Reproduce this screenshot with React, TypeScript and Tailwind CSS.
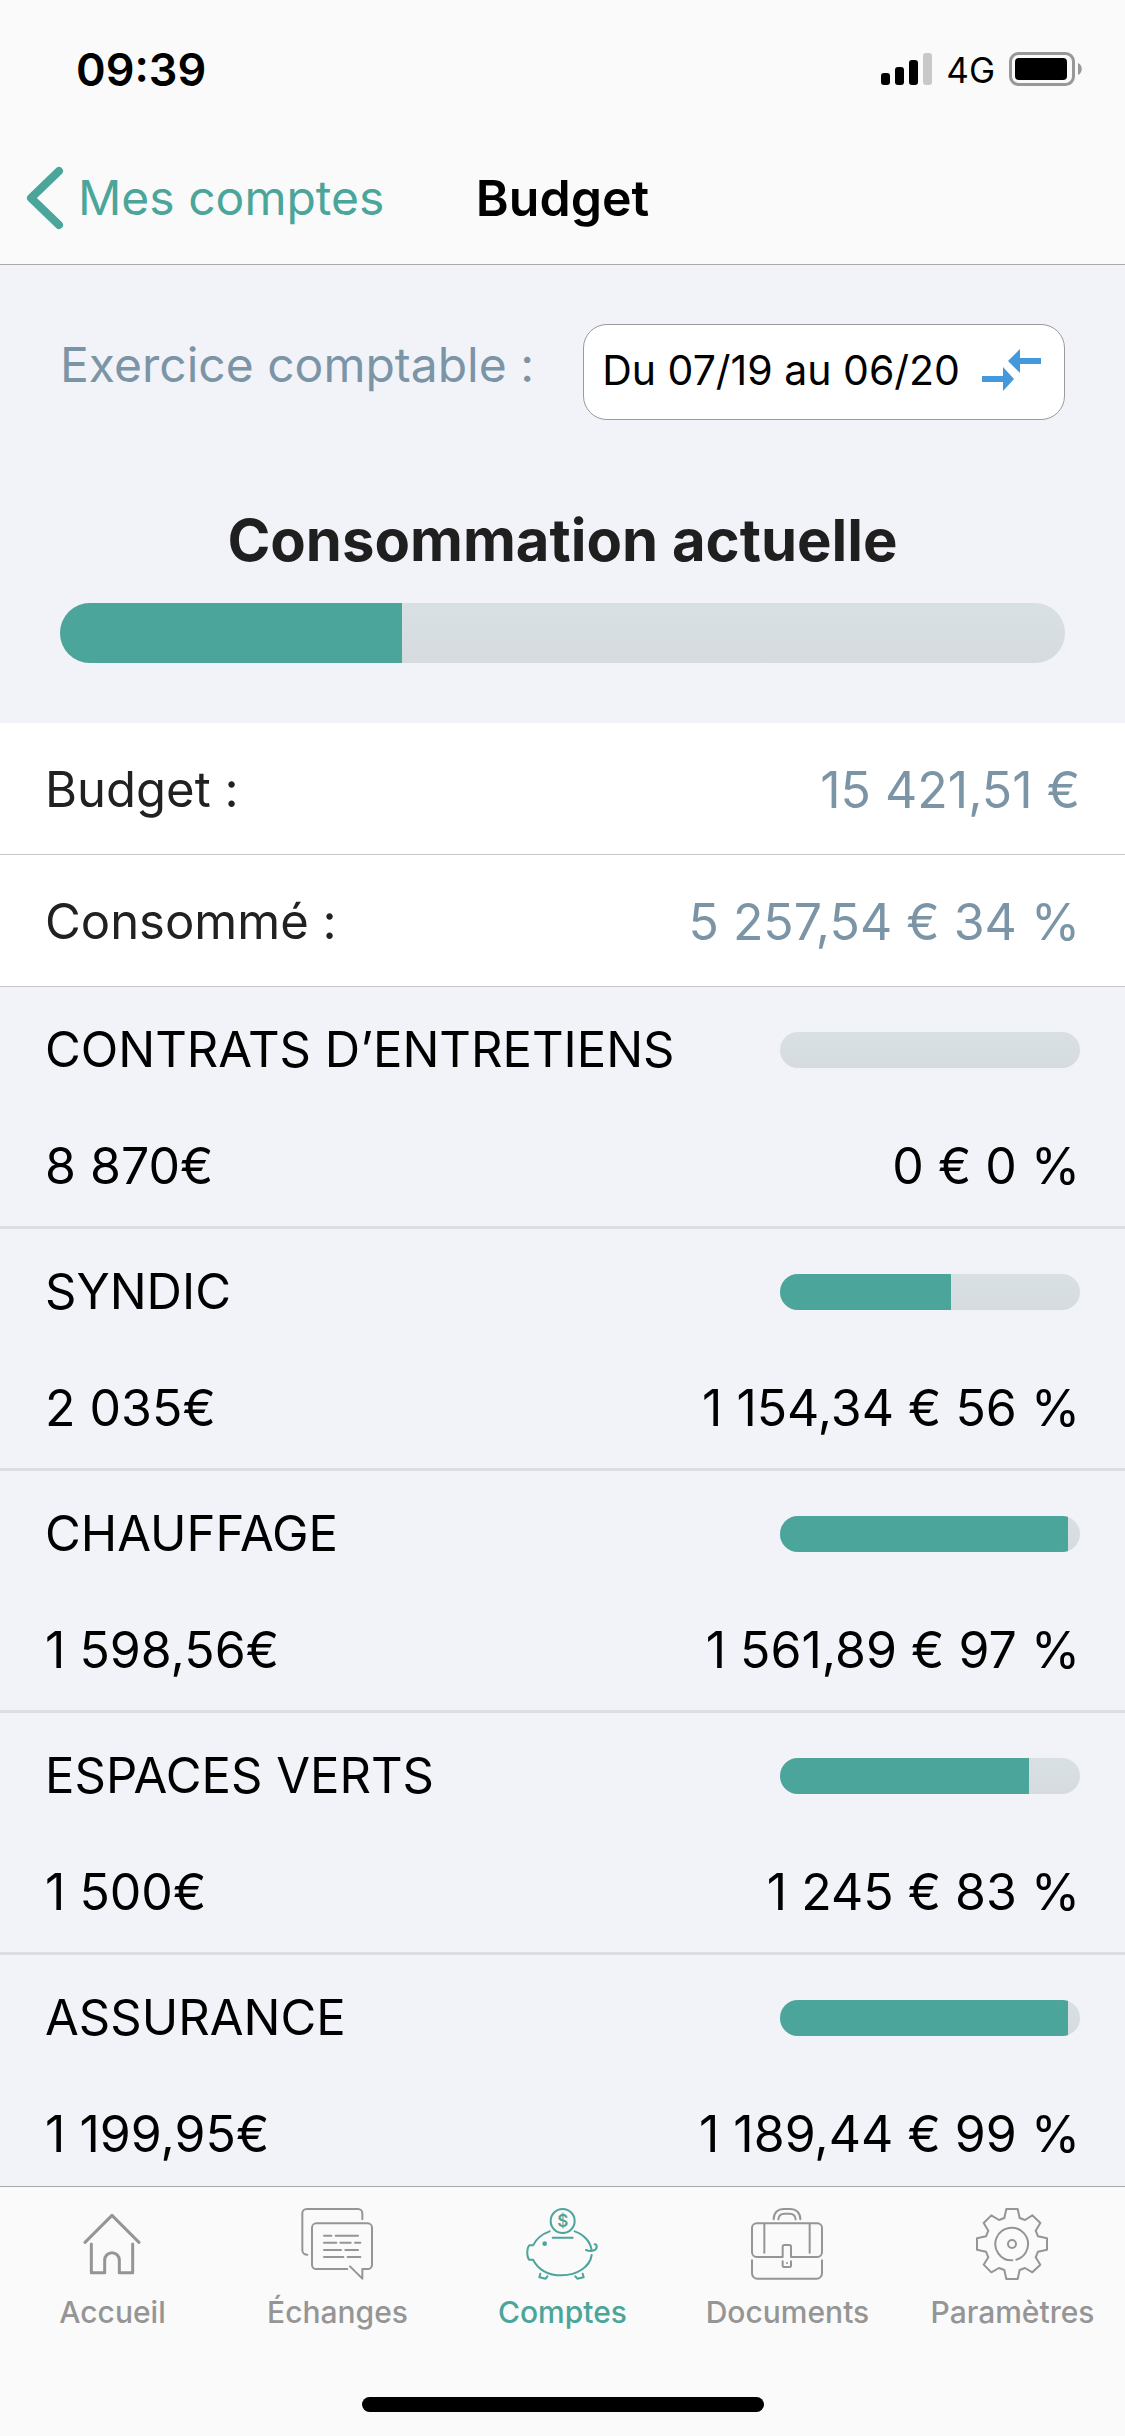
import type { ReactNode } from "react";

type Category = { name: string; budget: string; spent: string; percent: number };

const categories: Category[] = [
  { name: "CONTRATS D’ENTRETIENS", budget: "8 870€", spent: "0 € 0 %", percent: 0 },
  { name: "SYNDIC", budget: "2 035€", spent: "1 154,34 € 56 %", percent: 57 },
  { name: "CHAUFFAGE", budget: "1 598,56€", spent: "1 561,89 € 97 %", percent: 96 },
  { name: "ESPACES VERTS", budget: "1 500€", spent: "1 245 € 83 %", percent: 83 },
  { name: "ASSURANCE", budget: "1 199,95€", spent: "1 189,44 € 99 %", percent: 96 },
];

function StatusBar() {
  return (
    <div className="flex h-[132px] items-center justify-between pt-[6px] pr-[43px] pl-[76px]">
      <span className="text-[45px] leading-none font-semibold">09:39</span>
      <div className="flex items-center">
        <svg className="h-8 w-[51px]" viewBox="0 0 51 32" aria-hidden="true">
          <rect x="0" y="20" width="9" height="12" rx="3" />
          <rect x="14" y="14" width="9" height="18" rx="3" />
          <rect x="28" y="7" width="9" height="25" rx="3" />
          <rect x="42" y="0" width="9" height="32" rx="3" fill="#c8c8c8" />
        </svg>
        <span className="ml-[14px] pt-[2px] text-[35px] leading-none">4G</span>
        <svg className="ml-[14px] h-[34px] w-[73px]" viewBox="0 0 73 34" aria-hidden="true">
          <rect x="1.5" y="1.5" width="63" height="31" rx="8" fill="none" stroke="#989898" strokeWidth="3" />
          <rect x="6" y="6" width="52" height="22" rx="4" />
          <path d="M69 11 C74 13 74 21 69 23 Z" fill="#989898" />
        </svg>
      </div>
    </div>
  );
}

function NavBar() {
  return (
    <nav className="grid h-[132px] grid-cols-[1fr_auto_1fr] items-center leading-none">
      <a href="#comptes" className="flex items-center gap-[14px] pl-[26px] text-[48px] text-[#4ba59a]">
        <svg className="h-[64px] w-[38px]" viewBox="0 0 38 64" fill="none" stroke="currentColor" strokeWidth="8" strokeLinecap="round" strokeLinejoin="round" aria-hidden="true">
          <path d="M33 5 L5 32 L33 59" />
        </svg>
        Mes comptes
      </a>
      <h1 className="text-[50px] font-semibold">Budget</h1>
    </nav>
  );
}

function Progress({ percent, label, size }: { percent: number; label: string; size: string }) {
  return (
    <div
      role="progressbar"
      aria-label={label}
      aria-valuenow={percent}
      aria-valuemin={0}
      aria-valuemax={100}
      className={`overflow-hidden rounded-full bg-linear-to-b from-[#d9e0e4] to-[#d5dbde] ${size}`}
    >
      <div className="h-full bg-[#4ba59a]" style={{ width: `${percent}%` }} />
    </div>
  );
}

function SummaryRow({ label, value }: { label: string; value: string }) {
  return (
    <div className="flex h-[132px] items-center justify-between border-b border-[#c8c8cb] bg-white px-[45px] pt-[2px]">
      <dt className="text-[49px] text-[#212121]">{label}</dt>
      <dd className="text-[50px] text-[#7b95a7]">{value}</dd>
    </div>
  );
}

function CategoryRow({ name, budget, spent, percent }: Category) {
  return (
    <li className="border-b-3 border-[#dcdee1] px-[45px] pt-[31px] pb-7">
      <div className="flex h-16 items-center justify-between">
        <h3 className="text-[49px]">{name}</h3>
        <Progress percent={percent} label={name} size="h-9 w-[300px]" />
      </div>
      <div className="mt-[52px] flex h-16 items-center justify-between text-[50px]">
        <span>{budget}</span>
        <span>{spent}</span>
      </div>
    </li>
  );
}

function Icon({ children }: { children: ReactNode }) {
  return (
    <svg className="size-[72px]" viewBox="3 0 216 216" fill="none" stroke="currentColor" strokeWidth="6" strokeLinecap="round" strokeLinejoin="round" overflow="visible" aria-hidden="true">
      {children}
    </svg>
  );
}

const tabs: { label: string; active?: boolean; icon: ReactNode }[] = [
  {
    label: "Accueil",
    icon: (
      <g strokeWidth="9">
        <path d="M27 103 L108 22 L189 103" />
        <path d="M46 108 V194 H86 V156 a22 22 0 0 1 44 0 V194 H170 V108" />
      </g>
    ),
  },
  {
    label: "Échanges",
    icon: (
      <>
        <path d="M184 34 V16 a13 13 0 0 0-13-13 H17 A13 13 0 0 0 4 16 V127 a13 13 0 0 0 13 13 h2" />
        <path d="M139 183 H46 a13 13 0 0 1-13-13 V59 a13 13 0 0 1 13-13 H200 a13 13 0 0 1 13 13 V170 a13 13 0 0 1-13 13 H184 V212 L147 175" />
        <path d="M69 83 H91 M104 83 H171 M69 104 H106 M118 104 H149 M162 104 H178 M69 126 H120 M133 126 H171 M69 147 H127 M140 147 H178" />
      </>
    ),
  },
  {
    label: "Comptes",
    active: true,
    icon: (
      <>
        <circle cx="110" cy="39" r="36" />
        <text x="110" y="57" textAnchor="middle" fontSize="51" fontWeight="600" fill="currentColor" stroke="none">$</text>
        <path d="M80 89 H140" />
        <circle cx="56" cy="107" r="7" fill="currentColor" stroke="none" />
        <path d="M71 70 C48 78 30 94 21 112 H10 C2 120 2 146 9 155 H21 C36 183 66 202 107 202 C154 202 192 176 197 141" />
        <path d="M146 70 C175 80 194 102 197 128" />
        <path d="M180 126 C196 132 213 128 212 116 C212 112 209 109 206 109" />
        <path d="M43 197 L40 208 L59 212 L64 205" />
        <path d="M170 197 L173 208 L154 212 L148 205" />
      </>
    ),
  },
  {
    label: "Documents",
    icon: (
      <>
        <path d="M68 34 C68 13 82 3 97 3 H119 C134 3 148 13 148 34" />
        <path d="M82 34 C83 22 91 17 100 17 H116 C125 17 133 22 134 34" />
        <path d="M95 147 H17 A14 14 0 0 1 3 133 V60 A14 14 0 0 1 17 46 H199 A14 14 0 0 1 213 60 V133 A14 14 0 0 1 199 147 H120 V116 a5 5 0 0 0-5-5 H100 a5 5 0 0 0-5 5 Z" />
        <path d="M40 48 V134 M176 48 V134" />
        <path d="M3 157 V196 A16 16 0 0 0 19 212 H197 A16 16 0 0 0 213 196 V157" />
        <path d="M95 160 V173 a4 4 0 0 0 4 4 H116 a4 4 0 0 0 4-4 V160" />
        <circle cx="108" cy="165" r="3" fill="currentColor" stroke="none" />
      </>
    ),
  },
  {
    label: "Paramètres",
    icon: (
      <>
        <path d="M91 3 H125 L131 30 L147 36 L169 22 L193 45 L179 68 L186 85 L213 91 V125 L186 131 L179 148 L193 170 L169 193 L147 180 L131 186 L125 213 H91 L85 186 L69 180 L46 193 L23 170 L37 148 L30 131 L3 125 V91 L30 85 L37 68 L23 45 L46 22 L69 36 L85 30 Z" />
        <path d="M109 157 A49 49 0 1 1 121 155" />
        <circle cx="108" cy="108" r="12" />
      </>
    ),
  },
];

function TabBar() {
  return (
    <footer className="shrink-0 border-t border-[#a8a8a9] bg-[#fafafa]">
      <nav className="grid grid-cols-5 pt-[21px]">
        {tabs.map((tab) => (
          <a
            key={tab.label}
            href={`#${tab.label.toLowerCase()}`}
            className={`flex flex-col items-center gap-3 text-[30px] leading-10 font-medium ${tab.active ? "text-[#4ba59a]" : "text-[#959595]"}`}
          >
            <Icon>{tab.icon}</Icon>
            {tab.label}
          </a>
        ))}
      </nav>
      <div className="mx-auto mt-[65px] mb-6 h-[15px] w-[402px] rounded-full bg-black" />
    </footer>
  );
}

export default function App() {
  return (
    <div className="flex h-screen flex-col bg-[#f2f3f8] font-['Inter',sans-serif] text-black">
      <header className="shrink-0 border-b border-[#a8a8a9] bg-[#fafafb]">
        <StatusBar />
        <NavBar />
      </header>
      <main className="min-h-0 flex-1 overflow-y-auto leading-16 [scrollbar-width:none]">
        <section className="px-[60px] pt-[59px] pb-[60px]">
          <div className="flex justify-between">
            <label htmlFor="period" className="pt-[9px] text-[48px] text-[#7b95a7]">Exercice comptable :</label>
            <button id="period" type="button" className="flex h-24 items-center gap-[22px] rounded-3xl border border-[#9a9a9a] bg-white pr-[23px] pb-1 pl-[18px] text-[41px]">
              Du 07/19 au 06/20
              <svg className="h-[42px] w-[59px]" viewBox="0 0 59 42" fill="#4499dc" aria-hidden="true">
                <path d="M26 12 L38 0 V9 H59 V15 H38 V24 Z" />
                <path d="M0 27 H21 V18 L32 30 L21 42 V33 H0 Z" />
              </svg>
            </button>
          </div>
          <h2 className="mt-[82px] mb-[25px] text-center text-[58px] leading-[76px] font-bold text-[#1f1f1f]">Consommation actuelle</h2>
          <Progress percent={34} label="Consommation actuelle" size="h-[60px] w-full" />
        </section>
        <dl>
          <SummaryRow label="Budget :" value="15 421,51 €" />
          <SummaryRow label="Consommé :" value="5 257,54 € 34 %" />
        </dl>
        <ul>
          {categories.map((category) => (
            <CategoryRow key={category.name} {...category} />
          ))}
        </ul>
      </main>
      <TabBar />
    </div>
  );
}
